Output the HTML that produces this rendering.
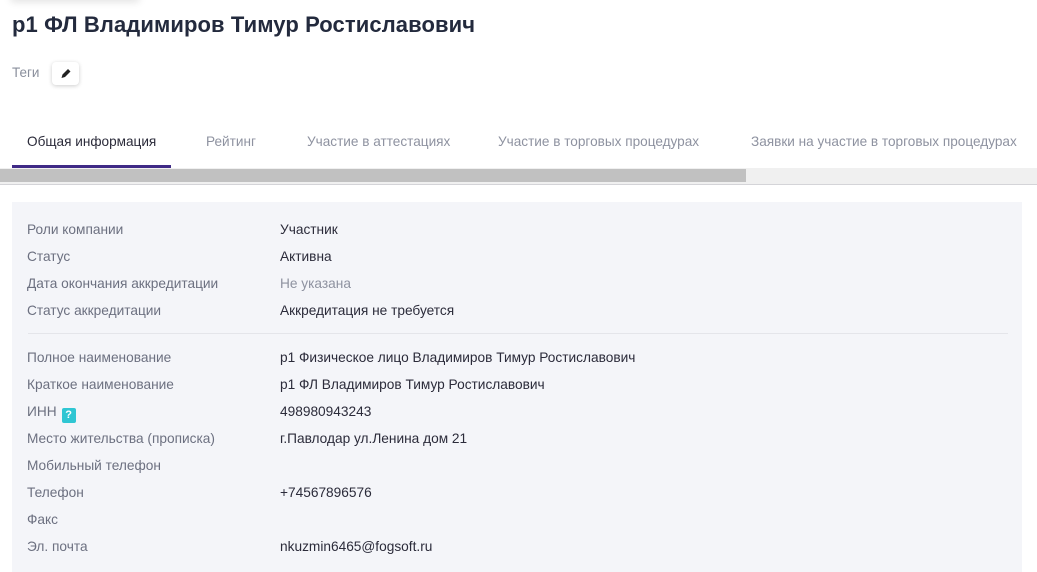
<!DOCTYPE html>
<html><head><meta charset="utf-8"><style>
*{margin:0;padding:0;box-sizing:border-box}
body{width:1037px;height:563px;overflow:hidden;background:#fff;font-family:"Liberation Sans","DejaVu Sans",sans-serif;position:relative;color:#2b2b3a}
.shadowtop{position:absolute;left:10px;top:-8px;width:130px;height:8px;box-shadow:0 2px 8px rgba(0,0,0,.12);border-radius:4px}
h1{position:absolute;left:12px;top:12px;font-size:22px;font-weight:bold;color:#232a3d;letter-spacing:.1px}
.tags{position:absolute;left:12px;top:65px;font-size:13.5px;color:#8a8f9c}
.pen{position:absolute;left:52px;top:62px;width:27px;height:23px;background:#fff;border-radius:4px;box-shadow:0 1px 4px rgba(0,0,0,.2)}
.tab{position:absolute;top:134px;font-size:13.6px;color:#8e92a0;white-space:nowrap}
.tab.a{color:#2b2b3a}
.ul{position:absolute;left:12px;top:165px;width:159px;height:3px;background:#3f2a86}
.track{position:absolute;left:0;top:168px;width:1037px;height:16px;background:#f0f0f0}
.thumb{position:absolute;left:0;top:169px;width:746px;height:13px;background:#c1c1c1}
.line{position:absolute;left:0;top:184px;width:1037px;height:1px;background:#d4d4d8}
.panel{position:absolute;left:12px;top:202px;width:1010px;height:370px;background:#f4f5f9}
.r{position:absolute;font-size:13.7px;white-space:nowrap}
.l{left:27px;color:#6c7080}
.v{left:280px;color:#2b2b3a}
.sep{position:absolute;left:28px;top:333px;width:980px;height:1px;background:#e4e5ea}
.q{display:inline-block;width:14px;height:15px;background:#2fc6d3;color:#fff;font-size:11px;text-align:center;line-height:15px;border-radius:2px;vertical-align:-2px;margin-left:5px;font-weight:bold}
</style></head><body>
<div class="shadowtop"></div>
<h1>р1 ФЛ Владимиров Тимур Ростиславович</h1>
<div class="tags">Теги</div>
<div class="pen"><svg width="27" height="23" viewBox="0 0 27 23"><path d="M9.5 16 L10.5 12.5 L16 7 L18.5 9.5 L13 15 Z" fill="#222"/></svg></div>
<div class="tab a" style="left:27px">Общая информация</div>
<div class="tab" style="left:206px">Рейтинг</div>
<div class="tab" style="left:307px">Участие в аттестациях</div>
<div class="tab" style="left:498px">Участие в торговых процедурах</div>
<div class="tab" style="left:751px">Заявки на участие в торговых процедурах</div>
<div class="ul"></div>
<div class="track"></div><div class="thumb"></div><div class="line"></div>
<div class="panel"></div>
<div class="r l" style="top:222px">Роли компании</div><div class="r v" style="top:222px">Участник</div>
<div class="r l" style="top:249px">Статус</div><div class="r v" style="top:249px">Активна</div>
<div class="r l" style="top:276px">Дата окончания аккредитации</div><div class="r v" style="top:276px;color:#8e92a0">Не указана</div>
<div class="r l" style="top:303px">Статус аккредитации</div><div class="r v" style="top:303px">Аккредитация не требуется</div>
<div class="sep"></div>
<div class="r l" style="top:350px">Полное наименование</div><div class="r v" style="top:350px">р1 Физическое лицо Владимиров Тимур Ростиславович</div>
<div class="r l" style="top:377px">Краткое наименование</div><div class="r v" style="top:377px">р1 ФЛ Владимиров Тимур Ростиславович</div>
<div class="r l" style="top:404px">ИНН<span class="q">?</span></div><div class="r v" style="top:404px">498980943243</div>
<div class="r l" style="top:431px">Место жительства (прописка)</div><div class="r v" style="top:431px">г.Павлодар ул.Ленина дом 21</div>
<div class="r l" style="top:458px">Мобильный телефон</div>
<div class="r l" style="top:485px">Телефон</div><div class="r v" style="top:485px">+74567896576</div>
<div class="r l" style="top:512px">Факс</div>
<div class="r l" style="top:539px">Эл. почта</div><div class="r v" style="top:539px">nkuzmin6465@fogsoft.ru</div>
</body></html>
